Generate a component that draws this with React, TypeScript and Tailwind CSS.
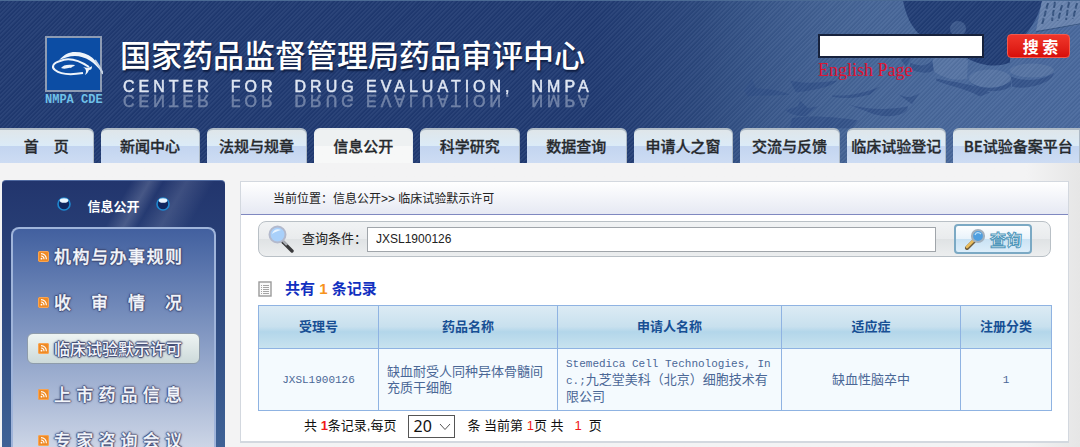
import { useState } from 'react';

const tabs = ['首　页', '新闻中心', '法规与规章', '信息公开', '科学研究', '数据查询', '申请人之窗', '交流与反馈', '临床试验登记', 'BE试验备案平台'];

const menu = ['机构与办事规则', '收审情况', '临床试验默示许可', '上市药品信息', '专家咨询会议'];

function Logo() {
  return (
    <div className="w-[58px] shrink-0">
      <svg viewBox="0 0 58 56" className="block h-14 w-[58px]" fill="none">
        <rect x="1" y="1" width="55" height="54" fill="#0c4da4" stroke="#8d9bb3" strokeWidth="2" />
        <path d="M14 24 C20 18 24 16 30 16 C44 16 53 24 58 38 C50 26 40 20 30 20 C24 20 20 22 14 24Z" fill="#eef4fb" />
        <path d="M44 31 C32 23 22 22 15 25 C8 27 6 31 10 34 C15 38 26 39 38 37" stroke="#eef4fb" strokeWidth="2" />
        <path d="M38 31 C41 32 45 32 47 30 C47 33 46 34 44 34 C43 36 42 38 40 39 C42 35 41 33 38 31Z" fill="#eef4fb" />
        <path d="M16 32 C18 29 22 28 30 29 C29 31 27 30 26 32 C23 31 21 34 16 32Z" fill="#eef4fb" />
        <path d="M50 24 C53 28 56 33 58 38" stroke="#c6d3e4" strokeWidth="2" />
      </svg>
      <div className="font-['Liberation_Mono',monospace] text-xs leading-4 font-bold whitespace-nowrap text-[#6fc0e8]">NMPA CDE</div>
    </div>
  );
}

// Pill bottle and scattered tablets behind the search box
function PillBackdrop() {
  return (
    <svg className="absolute top-0 right-0 h-full w-[380px]" viewBox="700 0 380 163" preserveAspectRatio="none">
      <defs>
        <linearGradient id="haze" x1="0" y1="0" x2="1" y2="0">
          <stop offset="0" stopColor="#4d6c9f" stopOpacity="0" />
          <stop offset="0.5" stopColor="#4d6c9f" stopOpacity="0.6" />
          <stop offset="1" stopColor="#4d6c9f" stopOpacity="0.6" />
        </linearGradient>
      </defs>
      <rect x="700" width="380" height="163" fill="url(#haze)" />
      <path d="M903 0 C906 14 911 26 920 34 L1008 48 C1024 40 1038 20 1042 0Z" fill="#213d75" />
      <path d="M1042 0 L1036 30 L1080 24 V0Z" fill="#6883ae" />
      <path
        d="M1048 2 L1042 24 M1055 1 L1052 20 M1062 4 L1058 20 M1069 1 L1066 19 M1077 2 L1073 18"
        stroke="#34527f"
        strokeWidth="2"
        strokeDasharray="6 2"
      />
      <path d="M1036 31 L1080 23" stroke="#34527f" />
      <path d="M968 32 H1010 V62 C996 68 980 64 968 58Z" fill="#213d75" />
      <g fill="#5573a3">
        <ellipse cx="958" cy="28" rx="8" ry="8" opacity="0.5" />
        <path d="M933 58 C940 50 960 52 968 60 L967 78 C955 82 940 76 933 70Z" />
        <ellipse cx="990" cy="78" rx="21" ry="9" />
        <ellipse cx="1032" cy="70" rx="22" ry="7" />
      </g>
      <g fill="#2f4e86" opacity="0.75">
        <path d="M967 80 C980 90 1000 90 1011 80 V86 C1004 91 990 92 980 89Z" />
        <path d="M1011 76 C1024 82 1044 80 1054 72 C1052 84 1024 90 1012 86Z" />
        <path d="M910 62 C918 66 926 66 932 60 L934 70 C926 74 916 72 910 68Z" />
        <path d="M900 58 L912 56 L906 66Z" />
        <path d="M790 80 C806 84 822 82 838 80 C828 88 812 90 796 92Z" />
        <path d="M832 95 C850 96 866 92 880 86 L870 94 C860 97 846 99 832 96Z" />
        <path d="M848 104 C868 110 890 110 908 106 C908 116 888 118 874 114Z" />
        <path d="M744 90 L752 78 L756 88 C768 88 780 90 790 94 C774 96 760 94 748 96Z" />
        <path d="M786 110 L798 106 L800 100 L808 108 L818 106 L806 116 C796 116 790 114 786 110Z" />
        <path d="M792 118 C812 114 842 118 858 120 L852 128 H790Z" />
        <path d="M936 80 C950 86 966 88 980 96 L990 92 C976 84 956 82 936 78Z" />
        <path d="M896 92 C904 98 912 98 920 92 L912 104Z" />
      </g>
    </svg>
  );
}

function RssIcon() {
  return (
    <svg viewBox="0 0 11 11" className="h-[11px] w-[11px] shrink-0">
      <rect width="11" height="11" rx="2" fill="#ee8a25" />
      <rect x="0.5" y="0.5" width="10" height="10" rx="1.5" fill="none" stroke="#f9a451" />
      <path d="M3 2.6 C6 2.6 8.4 5 8.4 8.2 M3 5 C4.8 5 6 6.4 6 8.2" fill="none" stroke="#fff" strokeWidth="1.1" />
      <circle cx="3.5" cy="7.7" r="0.9" fill="#fff" />
    </svg>
  );
}

function Orb() {
  return (
    <svg viewBox="0 0 14 14" className="h-3.5 w-3.5">
      <circle cx="7" cy="7" r="6" fill="#10265f" stroke="#1e88d0" strokeWidth="1.6" />
      <ellipse cx="7" cy="3.5" rx="4.2" ry="2.3" fill="#eaf6ff" />
    </svg>
  );
}

function Magnifier() {
  return (
    <svg viewBox="0 0 26 28" className="h-7 w-[26px]" fill="none">
      <path d="M15 17 L24 26" stroke="#3a3a3c" strokeWidth="3.4" strokeLinecap="round" />
      <path d="M15 16 L19 20" stroke="#a9adb3" strokeWidth="2.4" />
      <circle cx="9.5" cy="9.5" r="8" fill="#a9d0fa" stroke="#b3b9cc" strokeWidth="2" />
      <path d="M4 9 C5 5 9 3 13 5 C10 6 6 7 4 9Z" fill="#eaf5ff" />
    </svg>
  );
}

function GoldMagnifier() {
  return (
    <svg viewBox="0 0 22 22" className="h-[22px] w-[22px]" fill="none">
      <path d="M11 12 L3 20" stroke="#6c5a3c" strokeWidth="4" strokeLinecap="round" />
      <path d="M10 12 L3 19" stroke="#e9bc5c" strokeWidth="2.6" strokeLinecap="round" />
      <circle cx="14" cy="8" r="6" fill="#4f9fe0" stroke="#a3b1be" strokeWidth="2.2" />
      <path d="M11 7 C12 4 15 4 17 6" stroke="#b9def8" strokeWidth="1.2" />
    </svg>
  );
}

function ListIcon() {
  return (
    <svg viewBox="0 0 14 16" className="h-4 w-3.5" fill="none">
      <rect x="1" y="1" width="12" height="14" fill="#fafafa" stroke="#9a9a9a" strokeWidth="1.4" />
      <path d="M3 4.5H4M3 6.5H4M3 8.5H4M3 10.5H4M3 12.5H4M5 4.5H11M5 6.5H11M5 8.5H11M5 10.5H11M5 12.5H11" stroke="#a5a5a5" />
    </svg>
  );
}

export default function App() {
  const [keyword, setKeyword] = useState('');
  const [query, setQuery] = useState('JXSL1900126');
  const [pageSize, setPageSize] = useState('20');

  return (
    <div className="flex h-screen flex-col overflow-hidden bg-linear-to-r from-[#f3f3f4] from-95% to-[#e6e6e6] font-['Liberation_Sans','Noto_Sans_CJK_SC',sans-serif]">
      {/* Header */}
      <header className="relative shrink-0 border-t border-[#4a6a94] bg-linear-to-r from-[#203a72] from-55% via-[#3b5b8d] via-78% to-[#42639a]">
        <PillBackdrop />
        <div className="absolute inset-0 bg-[repeating-linear-gradient(135deg,rgba(255,255,255,0.05)_0px,rgba(255,255,255,0.05)_1px,rgba(0,0,0,0.03)_2px,rgba(0,0,0,0.03)_3px)]" />
        <div className="relative flex h-[127px] items-start justify-between pt-[35px] pr-[10px] pl-[45px]">
          <div className="flex gap-[17px]">
            <Logo />
            <div>
              <h1 className="font-['Noto_Sans_CJK_SC',sans-serif] text-[31px] leading-9 font-medium whitespace-nowrap text-white [text-shadow:1px_2px_2px_#0d1c40]">
                国家药品监督管理局药品审评中心
              </h1>
              <p className="mt-[5px] flex gap-[18px] pl-[3px] text-base leading-5 tracking-[4px] whitespace-pre text-[#dfe6f2] [-webkit-box-reflect:below_-7px_linear-gradient(rgba(0,0,0,0.4),rgba(0,0,0,0.4))] [-webkit-text-stroke:0.5px_#dfe6f2]">
                <span>CENTER</span>
                <span>FOR</span>
                <span>DRUG EVALUATION,</span>
                <span>NMPA</span>
              </p>
            </div>
          </div>
          <form className="-mt-[2px] flex gap-[23px]" onSubmit={(e) => e.preventDefault()}>
            <div className="flex flex-col">
              <input
                type="text"
                aria-label="搜索"
                value={keyword}
                onChange={(e) => setKeyword(e.target.value)}
                className="h-6 w-[166px] border-2 border-[#17223c] bg-white px-1 text-sm outline-none"
              />
              <a href="#english" className="font-['Liberation_Serif',serif] text-lg leading-6 text-[#e01230]">
                English Page
              </a>
            </div>
            <button
              type="submit"
              className="h-6 w-[63px] rounded border border-[#f2594c] bg-linear-to-b from-[#f0352a] to-[#d80c08] pl-1 font-['Noto_Sans_CJK_SC',sans-serif] text-base leading-5 font-bold whitespace-pre text-white"
            >
              搜 索
            </button>
          </form>
        </div>
        <nav className="relative grid grid-cols-[94fr_repeat(8,100fr)_127fr] gap-[7px]">
          {tabs.map((tab, i) => (
            <a
              key={tab}
              href={`#tab-${i}`}
              className={`flex h-[35px] items-center justify-center border-t-2 border-r pb-[2px] font-['Noto_Sans_CJK_SC',sans-serif] text-[15px] leading-5 font-medium whitespace-nowrap text-[#26292d] [-webkit-text-stroke:0.3px_#26292d] ${
                i === 0 ? 'rounded-tr-md' : i === tabs.length - 1 ? 'rounded-tl-md pl-1' : 'rounded-t-md'
              } ${
                i === 3
                  ? 'border-[#e6ebee] bg-linear-to-b from-[#eef1f2] from-50% to-[#f7f8f8] to-50%'
                  : 'border-[#aebac6] bg-[linear-gradient(#dfe6ea,#dbebf8_50%,#c3d5f0_50%,#cddcf3)]'
              }`}
            >
              {tab}
            </a>
          ))}
        </nav>
      </header>

      <div className="flex min-h-0 flex-1 pr-[11px] pl-[2px]">
        {/* Sidebar */}
        <aside className="mt-[17px] mr-[15px] flex w-[223px] shrink-0 flex-col overflow-hidden rounded-t border-t border-[#4f69a0] bg-linear-to-b from-[#22356d] to-[#3f6296] px-[9px]">
          <div className="flex h-[46px] shrink-0 items-center justify-center gap-4 bg-[linear-gradient(120deg,transparent_52%,rgba(255,255,255,0.16)_60%,transparent_66%,rgba(255,255,255,0.12)_76%,transparent_88%)]">
            <Orb />
            <h2 className="pt-1 font-['Noto_Sans_CJK_SC',sans-serif] text-[13px] leading-5 font-bold text-white">信息公开</h2>
            <Orb />
          </div>
          <ul className="min-h-0 flex-1 rounded-t-lg border-2 border-b-0 border-[#9fb4da] bg-linear-to-b from-[#42609f] to-[#ccd5e6] px-[14px] pt-1">
            {menu.map((item, i) => (
              <li key={item} className="flex h-[46px] items-center">
                <a
                  href={`#menu-${i}`}
                  className={`flex h-[31px] w-full items-center gap-[5px] rounded-md border pl-[10px] font-['Noto_Sans_CJK_SC',sans-serif] leading-6 font-medium text-[#f2f5fb] ${
                    i === 2
                      ? 'border-[#8e9cab] bg-linear-to-b from-[#eef4f3] to-[#cddada] text-base'
                      : 'border-transparent text-[17px] [-webkit-text-stroke:0.3px_#f2f5fb]'
                  } [text-shadow:1px_0_1px_#3d4670,-1px_0_1px_#3d4670,0_1px_1px_#3d4670,0_-1px_1px_#3d4670,0_0_3px_#3d4670]`}
                >
                  <RssIcon />
                  <span className="w-32 shrink-0 whitespace-nowrap [text-align-last:justify]">{item}</span>
                </a>
              </li>
            ))}
          </ul>
        </aside>

        {/* Content */}
        <main className="mt-[18px] min-w-0 flex-1 self-start border border-b-2 border-[#d3d8df] bg-white">
          <div className="h-[33px] border-b border-[#7f88c0] bg-linear-to-b from-white to-[#e6e9f3] pl-8 text-xs leading-[34px] text-[#222]">
            当前位置：信息公开&gt;&gt; 临床试验默示许可
          </div>

          <div className="px-[17px]">
            <form
              className="mt-[6px] flex h-9 items-center rounded-lg border border-[#b9c0c6] bg-[linear-gradient(#f1f3f4,#e9ebed_50%,#dfe2e4_50%,#eceeef)] pr-[18px] pl-[9px]"
              onSubmit={(e) => e.preventDefault()}
            >
              <Magnifier />
              <label htmlFor="query" className="pl-2 text-[13px] leading-5 whitespace-nowrap text-[#222]">
                查询条件：
              </label>
              <input
                id="query"
                type="text"
                value={query}
                onChange={(e) => setQuery(e.target.value)}
                className="h-[25px] min-w-0 flex-1 border border-[#a0a5aa] bg-white px-2 text-xs text-[#222] outline-none"
              />
              <button
                type="submit"
                className="ml-[18px] flex h-[30px] w-[78px] items-center justify-center gap-1 rounded border-2 border-[#7ba9c4] bg-[linear-gradient(#fdfeff,#e8f3fb_50%,#c9e2f4_50%,#ddeefa)] font-['Noto_Sans_CJK_SC',sans-serif] text-base leading-6 font-bold text-white [-webkit-text-stroke:1px_#4e97bb]"
              >
                <GoldMagnifier />
                查询
              </button>
            </form>

            <div className="mt-[22px] flex h-[26px] items-center gap-[13px] pb-[6px]">
              <ListIcon />
              <h2 className="text-[15px] leading-5 font-bold text-[#1130c0]">
                共有 <span className="text-[#f7941d]">1</span> 条记录
              </h2>
            </div>

            <table className="w-full table-fixed border-collapse [&_td]:border [&_td]:border-[#8fb3e2] [&_th]:border [&_th]:border-[#8fb3e2]">
              <thead>
                <tr className="h-[43px] bg-[linear-gradient(#dcebf4,#c8e0ee_48%,#b3d6ea_60%,#c9e3ef)] text-[13px] leading-5 text-[#174f94]">
                  <th className="w-[120px]">受理号</th>
                  <th className="w-[179px]">药品名称</th>
                  <th className="w-[224px]">申请人名称</th>
                  <th className="w-[179px]">适应症</th>
                  <th className="w-[91px]">注册分类</th>
                </tr>
              </thead>
              <tbody>
                <tr className="h-[62px] bg-[#f4fafe] text-[13px] leading-4 text-[#4a6796]">
                  <td className="text-center font-['Liberation_Mono',monospace] text-[11px]">JXSL1900126</td>
                  <td className="px-2 break-all">缺血耐受人同种异体骨髓间充质干细胞</td>
                  <td className="px-2 break-all">
                    <span className="font-['Liberation_Mono',monospace] text-[11px]">Stemedica Cell Technologies, Inc.;</span>
                    九芝堂美科（北京）细胞技术有限公司
                  </td>
                  <td className="text-center">缺血性脑卒中</td>
                  <td className="text-center font-['Liberation_Mono',monospace] text-[11px]">1</td>
                </tr>
              </tbody>
            </table>

            <div className="flex h-[30px] items-center pl-[46px] text-[13px] leading-5 whitespace-pre text-[#111]">
              <label htmlFor="page-size">
                共 <b className="text-[#f01818]">1</b>条记录,每页
              </label>
              <span className="relative mx-3 flex">
                <select
                  id="page-size"
                  value={pageSize}
                  onChange={(e) => setPageSize(e.target.value)}
                  className="h-[23px] w-[47px] appearance-none border border-[#555] bg-white pl-1 font-['Noto_Sans',sans-serif] text-base leading-5"
                >
                  <option>20</option>
                  <option>50</option>
                </select>
                <svg viewBox="0 0 12 8" className="pointer-events-none absolute top-2 right-1 h-2 w-3" fill="none" stroke="#555">
                  <path d="M1 1 L6 6.5 L11 1" />
                </svg>
              </span>
              <span>
                条 当前第 <span className="text-[#f01818]">1</span>页 共   <span className="text-[#f01818]">1</span>  页
              </span>
            </div>
          </div>
        </main>
      </div>
    </div>
  );
}
